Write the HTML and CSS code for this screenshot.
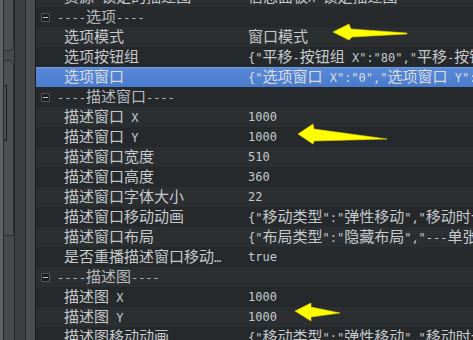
FILE: index.html
```html
<!DOCTYPE html>
<html lang="zh-CN">
<head>
    <meta charset="UTF-8">
    <title>属性面板</title>
    <link rel="stylesheet" href="styles.css">
</head>
<body>
    <div class="app">
        <div class="side">
            <div class="edge"></div>
            <div class="line"></div>
            <div class="dock">
                <div class="pane top"></div>
                <div class="pane mid"><div class="slot"></div></div>
            </div>
            <div class="line"></div>
            <div class="strip dark"></div>
            <div class="line"></div>
            <div class="strip"></div>
            <div class="line deep"></div>
        </div>

        <div class="tree">
            <div class="rows">
                <div class="row alt">
                    <div class="key"><span class="c">资源</span>-<span class="c">锁定的描述图</span></div>
                    <div class="val"><span class="c">信息面板</span>X-<span class="c">锁定描述图</span></div>
                </div>
                <div class="row sec">
                    <i class="fold"></i><span class="title">----<span class="c">选项</span>----</span>
                </div>
                <div class="row alt">
                    <div class="key"><span class="c">选项模式</span></div>
                    <div class="val"><span class="c">窗口模式</span></div>
                </div>
                <div class="row">
                    <div class="key"><span class="c">选项按钮组</span></div>
                    <div class="val">{"<span class="c">平移</span>-<span class="c">按钮组</span> X":"80","<span class="c">平移</span>-<span class="c">按钮组</span> Y":"0"}</div>
                </div>
                <div class="row selected">
                    <div class="key"><span class="c">选项窗口</span></div>
                    <div class="val">{"<span class="c">选项窗口</span> X":"0","<span class="c">选项窗口</span> Y":"0"}</div>
                </div>
                <div class="row sec">
                    <i class="fold"></i><span class="title">----<span class="c">描述窗口</span>----</span>
                </div>
                <div class="row alt">
                    <div class="key"><span class="c">描述窗口</span> X</div>
                    <div class="val">1000</div>
                </div>
                <div class="row">
                    <div class="key"><span class="c">描述窗口</span> Y</div>
                    <div class="val">1000</div>
                </div>
                <div class="row alt">
                    <div class="key"><span class="c">描述窗口宽度</span></div>
                    <div class="val">510</div>
                </div>
                <div class="row">
                    <div class="key"><span class="c">描述窗口高度</span></div>
                    <div class="val">360</div>
                </div>
                <div class="row alt">
                    <div class="key"><span class="c">描述窗口字体大小</span></div>
                    <div class="val">22</div>
                </div>
                <div class="row">
                    <div class="key"><span class="c">描述窗口移动动画</span></div>
                    <div class="val">{"<span class="c">移动类型</span>":"<span class="c">弹性移动</span>","<span class="c">移动时长</span>":"10"}</div>
                </div>
                <div class="row alt">
                    <div class="key"><span class="c">描述窗口布局</span></div>
                    <div class="val">{"<span class="c">布局类型</span>":"<span class="c">隐藏布局</span>","---<span class="c">单张图片</span>---":""}</div>
                </div>
                <div class="row">
                    <div class="key"><span class="c">是否重播描述窗口移动动画</span></div>
                    <div class="val">true</div>
                </div>
                <div class="row sec alt">
                    <i class="fold"></i><span class="title">----<span class="c">描述图</span>----</span>
                </div>
                <div class="row">
                    <div class="key"><span class="c">描述图</span> X</div>
                    <div class="val">1000</div>
                </div>
                <div class="row alt">
                    <div class="key"><span class="c">描述图</span> Y</div>
                    <div class="val">1000</div>
                </div>
                <div class="row">
                    <div class="key"><span class="c">描述图移动动画</span></div>
                    <div class="val">{"<span class="c">移动类型</span>":"<span class="c">弹性移动</span>","<span class="c">移动时长</span>":"10"}</div>
                </div>
            </div>
        </div>
    </div>

    <!-- annotation arrows drawn over the screenshot -->
    <svg class="marks" width="473" height="340" viewBox="0 0 473 340">
        <polygon points="333,32 349,24 351,29 407,33 407,34 352,37 349,40"/>
        <polygon points="298,134 313,124 314,129 387,139 314,141 313,144"/>
        <polygon points="295,311 311,303 311,307 340,313 311,317 311,321"/>
    </svg>
</body>
</html>
```

FILE: styles.css
```css
body {
    margin: 0;
    background: #25292c;
    overflow: hidden;
    font-family: "DejaVu Sans Mono", "Liberation Mono", monospace;
    font-size: 12px;
    color: #c6cacd;
}

.app {
    display: flex;
    height: 340px;
}

/* left dock strips */
.side {
    display: flex;
    width: 36px;
    flex-shrink: 0;
}
.edge {
    width: 3px;
    background: #606366;
}
.line {
    width: 1px;
    background: #26282a;
}
.line.deep {
    background: #191b1d;
}
.dock {
    width: 10px;
    background: #47494c;
    display: flex;
    flex-direction: column;
    gap: 9px;
}
.pane {
    background: #4c4f52;
    border: 1px solid #2d2f31;
    border-left: none;
}
.pane.top {
    height: 52px;
    margin-top: -2px;
    border-top: none;
    border-radius: 0 0 5px 0;
}
.pane.mid {
    height: 150px;
    border-radius: 0 5px 0 0;
    padding-top: 24px;
}
.slot {
    width: 2px;
    height: 54px;
    border: 1px solid #1e1f21;
    border-left: none;
}
.strip {
    width: 9px;
    background: #4a4d50;
}
.strip.dark {
    width: 10px;
    background: #3b3e41;
}

/* property tree */
.tree {
    flex: 1;
    overflow: hidden;
    background: #25292c;
}
.rows {
    margin-top: -13px;
}
.row {
    display: flex;
    align-items: center;
    height: 20px;
    line-height: 20px;
    white-space: nowrap;
}
.row.alt {
    background: #2b2f32;
}
.row.selected {
    background: linear-gradient(#5a8bdb, #4a7acb);
    box-shadow: inset 0 1px 0 #6e9be2;
    color: #d9dde2;
}
.key {
    width: 170px;
    padding: 0 14px 0 28px;
    overflow: hidden;
    text-overflow: ellipsis;
    flex-shrink: 0;
}
.val {
    flex: 1;
    overflow: hidden;
}
.c {
    font-family: "Noto Sans CJK SC", sans-serif;
    font-size: 15px;
}

.fold {
    position: relative;
    width: 7px;
    height: 7px;
    margin: 0 7px 0 5px;
    background: #1b1d1f;
    border: 1px solid #54585c;
    border-radius: 1px;
}
.fold::after {
    content: "";
    position: absolute;
    left: 1px;
    top: 3px;
    width: 5px;
    height: 1px;
    background: #c4c4c4;
}
.title {
    color: #b6babe;
}

.marks {
    position: absolute;
    top: 0;
    left: 0;
    pointer-events: none;
}
.marks polygon {
    fill: #ffff00;
    stroke: #e0d400;
    stroke-width: 0.6;
}
```
